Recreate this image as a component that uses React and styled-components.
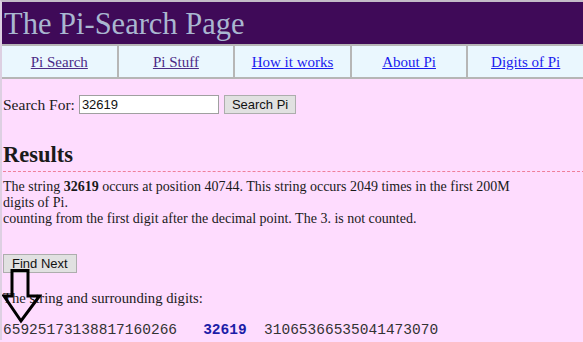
import React, { useState } from 'react';
import styled, { createGlobalStyle } from 'styled-components';

const GlobalStyle = createGlobalStyle`
  html, body {
    margin: 0;
    padding: 0;
    background: #fedcfe;
  }
  body {
    font-family: 'Liberation Serif', 'Times New Roman', serif;
    color: #1a1a1a;
  }
`;

// Outer frame: thin grey line at top and left like the original window
const Page = styled.div`
  border-top: 2px solid #c4bcc8;
  border-left: 2px solid #ddd0e2;
  min-height: 340px;
  box-sizing: border-box;
  overflow: hidden;
`;

const Header = styled.header`
  background: #3f0a58;
  height: 42px;
  display: flex;
  align-items: center;
  padding-left: 2px;

  h1 {
    margin: 0;
    font-weight: normal;
    font-size: 30.5px;
    color: #a9b7d0;
    line-height: 1;
    padding-top: 2px;
  }
`;

// Nav table: grey lines between the cells
const Nav = styled.nav`
  display: grid;
  grid-template-columns: repeat(5, 1fr);
  gap: 2px;
  background: #b6b6b6;
  border-top: 2px solid #b6b6b6;
  border-bottom: 2px solid #b6b6b6;
`;

const NavCell = styled.div`
  background: #eaf7fe;
  height: 31px;
  display: flex;
  align-items: center;
  justify-content: center;
`;

const NavLink = styled.a`
  font-size: 15px;
  color: ${({ $visited }) => ($visited ? '#4b2a86' : '#1a1aee')};
  text-decoration: underline;
  padding-top: 2px;
`;

const Content = styled.main`
  padding: 0 1px;
`;

const SearchRow = styled.form`
  display: flex;
  align-items: center;
  gap: 4px;
  margin-top: 16px;
  font-size: 15.5px;
`;

const TextInput = styled.input`
  width: 134px;
  height: 15px;
  padding: 1px 2px;
  border: 1px solid #a0a0a0;
  font-family: 'Liberation Sans', Arial, sans-serif;
  font-size: 13px;
  color: #111;
  background: #fff;
  margin-right: 1px;
`;

const Button = styled.button`
  font-family: 'Liberation Sans', Arial, sans-serif;
  font-size: 13px;
  color: #111;
  background: #e1e1e1;
  border: 1px solid #adadad;
  height: 19px;
  padding: 0 ${({ $wide }) => ($wide ? '7px' : '8px')};
  line-height: 1;
  cursor: pointer;
`;

const ResultsTitle = styled.h2`
  font-size: 22.5px;
  font-weight: bold;
  margin: 28px -3px 0 0;
  padding-bottom: 3px;
  border-bottom: 1px dashed #ef7f9b;
`;

const Para = styled.p`
  font-size: 14px;
  line-height: 16px;
  margin: 7px 0 0;
  max-width: 525px;
`;

const NextForm = styled.div`
  margin-top: 27px;
`;

const DigitsBlock = styled.div`
  position: relative;
  margin-top: 17px;
`;

const Caption = styled.p`
  font-size: 14.7px;
  margin: 0;
  line-height: 17px;
`;

const Digits = styled.pre`
  font-family: 'Liberation Mono', 'Courier New', monospace;
  font-size: 14.5px;
  color: #333;
  margin: 15px 0 0;
  line-height: 16px;

  b {
    color: #1c1ca8;
  }
`;

// Hand-drawn annotation arrow lying over the text
const Arrow = styled.svg`
  position: absolute;
  left: -1px;
  top: -21px;
  pointer-events: none;
`;

export default function App() {
  const [query, setQuery] = useState('32619');

  return (
    <>
      <GlobalStyle />
      <Page>
        <Header>
          <h1>The Pi-Search Page</h1>
        </Header>
        <Nav>
          <NavCell><NavLink href="#" $visited>Pi Search</NavLink></NavCell>
          <NavCell><NavLink href="#" $visited>Pi Stuff</NavLink></NavCell>
          <NavCell><NavLink href="#">How it works</NavLink></NavCell>
          <NavCell><NavLink href="#">About Pi</NavLink></NavCell>
          <NavCell><NavLink href="#">Digits of Pi</NavLink></NavCell>
        </Nav>
        <Content>
          <SearchRow onSubmit={(e) => e.preventDefault()}>
            <span>Search For:</span>
            <TextInput value={query} onChange={(e) => setQuery(e.target.value)} />
            <Button type="submit" $wide>Search Pi</Button>
          </SearchRow>

          <ResultsTitle>Results</ResultsTitle>

          <Para>
            The string <b>32619</b> occurs at position 40744. This string occurs 2049 times in the first 200M digits of Pi.
            <br />
            counting from the first digit after the decimal point. The 3. is not counted.
          </Para>

          <NextForm>
            <Button type="button">Find Next</Button>
          </NextForm>

          <DigitsBlock>
            <Caption>The string and surrounding digits:</Caption>
            <Digits>
              65925173138817160266   <b>32619</b>  31065366535041473070
            </Digits>
            <Arrow width="40" height="56" viewBox="0 0 40 56">
              <path
                d="M10 1.5 H26 V27 H37.5 L19 52 L2 27 H10 Z"
                fill="none"
                stroke="#000"
                strokeWidth="3"
                strokeLinejoin="miter"
              />
            </Arrow>
          </DigitsBlock>
        </Content>
      </Page>
    </>
  );
}
